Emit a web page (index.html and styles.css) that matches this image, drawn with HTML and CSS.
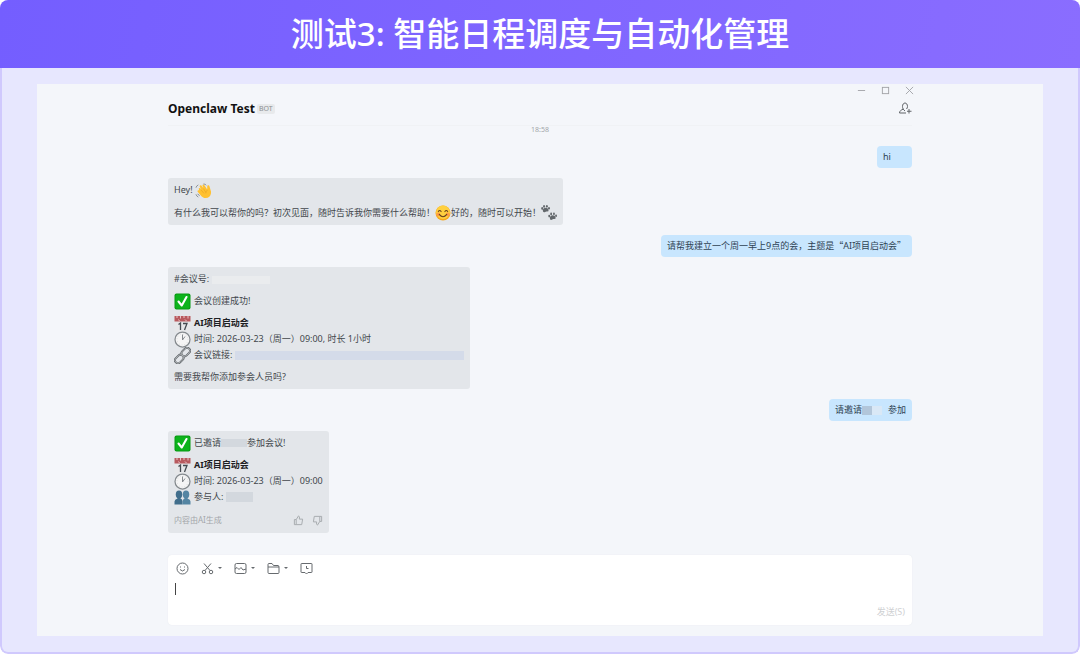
FILE: index.html
```html
<!DOCTYPE html>
<html lang="zh-CN">
<head>
<meta charset="utf-8">
<title>测试3: 智能日程调度与自动化管理</title>
<link rel="stylesheet" href="styles.css">
</head>
<body>
<svg class="defs" aria-hidden="true">
  <symbol id="check" viewBox="0 0 34 34">
    <rect x="1" y="1" width="32" height="32" rx="4" fill="#079a12"/>
    <rect x="3" y="3" width="28" height="28" rx="3" fill="#0cb31b"/>
    <path d="M9 17l6.500 8L25 8" fill="none" stroke="#fff" stroke-width="4.200" stroke-linecap="round" stroke-linejoin="round"/>
  </symbol>
  <symbol id="calendar" viewBox="0 0 34 34">
    <rect x="1" y="3" width="32" height="31" fill="#e6e7e9"/>
    <rect x="1" y="2" width="32" height="11" fill="#b85a5f"/>
    <path d="M6 2v4M13 2v5M20 2v4M28 2v5M9 9l2 3M22 9l3 3" stroke="#e9c5c7" stroke-width="2"/>
    <path d="M9 19l4-3v14M18 17h8l-5 13" fill="none" stroke="#444a50" stroke-width="2.600"/>
  </symbol>
  <symbol id="clock" viewBox="0 0 34 34">
    <circle cx="17" cy="17" r="15" fill="#f5f5f5" stroke="#858a8e" stroke-width="2.500"/>
    <circle cx="17" cy="17" r="11" fill="none" stroke="#c9cbcd" stroke-width="2" stroke-dasharray="1 4.760"/>
    <path d="M17 7v11l5-7" fill="none" stroke="#85898d" stroke-width="2"/>
  </symbol>
  <symbol id="link" viewBox="0 0 34 34">
    <g fill="none" stroke="#62676b" stroke-width="4">
      <rect x="14" y="4" width="19" height="12" rx="6" transform="rotate(-45 23.500 10)"/>
      <rect x="1" y="18" width="19" height="12" rx="6" transform="rotate(-45 10.500 24)"/>
    </g>
    <g fill="none" stroke="#c9cccf" stroke-width="1.300">
      <rect x="14" y="4" width="19" height="12" rx="6" transform="rotate(-45 23.500 10)"/>
      <rect x="1" y="18" width="19" height="12" rx="6" transform="rotate(-45 10.500 24)"/>
    </g>
  </symbol>
  <symbol id="people" viewBox="0 0 34 34">
    <g fill="#416e8c"><ellipse cx="10" cy="11" rx="6.500" ry="8"/><path d="M1 31v-6q0-4 6-6v-4h6v4q4 1 4 6v6z"/></g>
    <g fill="#5485a3"><ellipse cx="24" cy="11" rx="6.500" ry="8"/><path d="M17 31v-6q0-4 4-6v-4h6v4q6 2 6 6v6z"/></g>
  </symbol>
  <symbol id="wave" viewBox="0 0 34 34">
    <path d="M8 13c0-3 3-3 4-1l1 1-3-5c-1-3 2-4 4-2l4 5-2-5c-1-3 3-4 4-1l6 9V8c0-4 4-4 5 0l3 10c1 8-4 14-11 14-5 0-8-2-11-6L6 19c-2-3 1-5 3-3z" fill="#ffc131"/>
    <path d="M13 15l6 7M18 12l5 8M27 15q-5 2-4 7" fill="none" stroke="#e29f22" stroke-width="1.200"/>
    <path d="M2 10q1-4 5-6M18 2q4 0 6 3M2 24q1 4 5 6M6 23q1 3 4 4" fill="none" stroke="#7e858b" stroke-width="1.800"/>
  </symbol>
  <symbol id="smile" viewBox="0 0 34 34">
    <circle cx="17" cy="17" r="16" fill="#f6a81d"/>
    <circle cx="17" cy="15.500" r="14.500" fill="#ffd03e"/>
    <circle cx="7" cy="20" r="4" fill="#ff9c45"/><circle cx="27" cy="20" r="4" fill="#ff9c45"/>
    <path d="M7 14q3-5 6 0M21 14q3-5 6 0M9 20q8 10 16 0" fill="none" stroke="#69411d" stroke-width="2.200" stroke-linecap="round"/>
  </symbol>
  <symbol id="paws" viewBox="0 0 34 34">
    <g fill="#62676b"><path d="M4 13q-1-5 5-7 6 0 7 4 1 4-3 4-3-1-4 1-4 2-5-2z"/><ellipse cx="2.500" cy="7.500" rx="2" ry="3"/><ellipse cx="6.500" cy="3" rx="2" ry="3"/><ellipse cx="12.500" cy="2.800" rx="2" ry="2.800"/><ellipse cx="17" cy="7" rx="2" ry="2.600"/></g>
    <g transform="translate(15 16)" fill="#62676b"><path d="M4 13q-1-5 5-7 6 0 7 4 1 4-3 4-3-1-4 1-4 2-5-2z"/><ellipse cx="2.500" cy="7.500" rx="2" ry="3"/><ellipse cx="6.500" cy="3" rx="2" ry="3"/><ellipse cx="12.500" cy="2.800" rx="2" ry="2.800"/><ellipse cx="17" cy="7" rx="2" ry="2.600"/></g>
  </symbol>
</svg>

<div class="frame">
  <header class="banner"><h1>测试3: 智能日程调度与自动化管理</h1></header>
  <div class="stage">
    <main class="app">
      <div class="window-bar">
        <button type="button" aria-label="最小化"><svg viewBox="0 0 10 10"><path d="M1 5h8"/></svg></button>
        <button type="button" aria-label="最大化"><svg viewBox="0 0 10 10"><rect x="1.500" y="1.500" width="7" height="7"/></svg></button>
        <button type="button" aria-label="关闭"><svg viewBox="0 0 10 10"><path d="M1 1l8 8M9 1L1 9"/></svg></button>
      </div>
      <div class="chat-head">
        <h2>Openclaw Test</h2><span class="tag">BOT</span>
        <button type="button" class="add" aria-label="添加成员"><svg viewBox="0 0 28 26"><path d="M14 18c-4-3-5-6-5-9 0-4 2-7 5-7s5 3 5 7c0 2-1 4-2 5M11 14c-5 2-8 4-8 8h13M22 14v9M18 18.500h9"/></svg></button>
      </div>
      <time class="stamp">18:58</time>

      <div class="chat">
        <div class="msg me short"><p>hi</p></div>
        <div class="msg bot">
          <p>Hey! <svg class="emoji"><use href="#wave"/></svg></p>
          <p>有什么我可以帮你的吗？初次见面，随时告诉我你需要什么帮助！<svg class="emoji"><use href="#smile"/></svg>好的，随时可以开始！<svg class="emoji"><use href="#paws"/></svg></p>
        </div>
        <div class="msg me"><p>请帮我建立一个周一早上9点的会，主题是<span class="full">“</span>AI项目启动会<span class="full">”</span></p></div>
        <div class="msg bot wide">
          <p>#会议号: <span class="mask number"></span></p>
          <p class="line"><svg class="emoji"><use href="#check"/></svg>会议创建成功!</p>
          <div>
            <p class="line"><svg class="emoji"><use href="#calendar"/></svg><strong>AI项目启动会</strong></p>
            <p class="line"><svg class="emoji"><use href="#clock"/></svg>时间: 2026-03-23（周一）09:00, 时长 1小时</p>
            <p class="line"><svg class="emoji"><use href="#link"/></svg>会议链接: <span class="mask url"></span></p>
          </div>
          <p>需要我帮你添加参会人员吗?</p>
        </div>
        <div class="msg me"><p>请邀请<span class="mask name"></span>参加</p></div>
        <div class="msg bot">
          <p class="line"><svg class="emoji"><use href="#check"/></svg>已邀请<span class="mask guest"></span>参加会议!</p>
          <div>
            <p class="line"><svg class="emoji"><use href="#calendar"/></svg><strong>AI项目启动会</strong></p>
            <p class="line"><svg class="emoji"><use href="#clock"/></svg>时间: 2026-03-23（周一）09:00</p>
            <p class="line"><svg class="emoji"><use href="#people"/></svg>参与人: <span class="mask person"></span></p>
          </div>
          <div class="msg-foot">
            <span>内容由AI生成</span>
            <button type="button" aria-label="赞"><svg viewBox="0 0 24 24"><path d="M3 10h4v11H3zM7 10l5-8q3 0 2 7h7l-2 12H7"/></svg></button>
            <button type="button" aria-label="踩"><svg viewBox="0 0 24 24"><path d="M21 14h-4V3h4zM17 14l-5 8q-3 0-2-7H3L5 3h12"/></svg></button>
          </div>
        </div>
      </div>

      <form class="composer">
        <div class="tools">
          <button type="button" aria-label="表情"><svg viewBox="0 0 26 26"><circle cx="13" cy="13" r="11"/><path d="M8 15q5 6 10 0M9 9v2M17 9v2"/></svg></button>
          <button type="button" class="more" aria-label="截图"><svg viewBox="0 0 26 26"><circle cx="6" cy="20" r="3.500"/><circle cx="20" cy="20" r="3.500"/><path d="M6 3l12 14M20 3L8 17"/></svg><i></i></button>
          <button type="button" class="more" aria-label="图片"><svg viewBox="0 0 26 26"><rect x="2" y="3" width="22" height="20" rx="3"/><path d="M2 14l4-3 4 4 4-4 4 5 6-2"/></svg><i></i></button>
          <button type="button" class="more" aria-label="文件"><svg viewBox="0 0 26 26"><path d="M2 10V5q0-2 2-2h6l3 4h9q2 0 2 3M2 10h22v11q0 2-2 2H4q-2 0-2-2z"/></svg><i></i></button>
          <button type="button" aria-label="聊天记录"><svg viewBox="0 0 26 26"><path d="M3 3h20q1 0 1 1v16q0 1-1 1h-7l-3 3-3-3H3q-1 0-1-1V4q0-1 1-1zM13 8v5h4"/></svg></button>
        </div>
        <div class="entry"><span class="caret"></span><textarea aria-label="输入消息" rows="1"></textarea></div>
        <button type="submit" class="send">发送(S)</button>
      </form>
    </main>
  </div>
</div>
</body>
</html>
```
FILE: styles.css
```css
* { box-sizing: border-box; }
body {
  margin: 0;
  background: #fff;
  font: 9px/16px "Noto Sans", "Noto Sans CJK SC", sans-serif;
  color: #42474c;
}
h1, h2, p { margin: 0; }
button { display: flex; align-items: center; padding: 0; border: 0; background: none; font: inherit; color: inherit; }
svg { display: block; overflow: visible; }
button svg { fill: none; stroke: currentColor; }
.defs { display: none; }

.frame { display: flex; flex-direction: column; min-height: 100vh; border-radius: 8px; overflow: hidden; }
.banner {
  padding: 10px 0;
  background: linear-gradient(100deg, #745eff, #8a6dff);
  color: #fff;
  text-align: center;
}
.banner h1 { font: 500 33px/48px "Noto Sans", "Noto Sans CJK SC", sans-serif; }
.stage {
  flex: 1;
  display: flex;
  padding: 16px 35px;
  background: #e7e7fe;
  border: 2px solid #d0c9fd;
  border-top: 0;
  border-radius: 0 0 8px 8px;
}
.app { flex: 1; display: flex; flex-direction: column; padding-bottom: 10px; background: #f4f6fa; }

.window-bar { display: flex; justify-content: flex-end; gap: 15px; padding: 2px 129px 0; color: #a0a2a6; }
.window-bar svg { width: 9px; height: 9px; }
.chat-head { display: flex; align-items: center; gap: 2px; margin: 4px 131px 0; height: 27px; padding-bottom: 7px; border-bottom: 1px solid #f0f2f5; }
.chat-head h2 { font-size: 12px; font-weight: 700; color: #111; }
.tag { padding: 0 2px; background: #e8eaec; border-radius: 2px; font-size: 7px; line-height: 10px; color: #8d9093; }
.add { margin-left: auto; color: #606468; }
.add svg { width: 14px; height: 13px; stroke-width: 2; }
.stamp { font-size: 7px; line-height: 8px; text-align: center; color: #a3a6aa; }

.chat { display: flex; flex-direction: column; align-items: flex-start; gap: 10px; padding: 12px 131px 22px; }
.msg { display: flex; flex-direction: column; gap: 6px; padding: 4px 6px; border-radius: 3px; }
.bot { background: #e3e6ea; }
.wide { width: 302px; }
.me { align-self: flex-end; padding: 3px 6px; background: #c8e6fe; border-radius: 4px; color: #2f4354; }
.short { min-width: 35px; }
.full { font-family: "Noto Sans CJK SC", sans-serif; }
.emoji { display: inline-block; width: 16px; height: 16px; vertical-align: middle; }
.line { display: flex; align-items: center; gap: 3px; height: 16px; }
.line .emoji { width: 17px; height: 17px; }
.line .mask { margin: 0 -3px; }
strong { color: #1d2023; }
.mask { display: inline-block; height: 8px; vertical-align: middle; background: #d3d8de; }
.number { width: 58px; background: #eaecee; }
.line .url { flex: 1; height: 9px; margin: 0; background: #d4dbe9; }
.name { width: 20px; height: 9px; margin: 0 6px 0 0; background: linear-gradient(90deg, #b2c6da 50%, #d9e8f6 50%); }
.guest { width: 26px; }
.line .person { width: 27px; height: 10px; margin: 0; }
.msg-foot { display: flex; align-items: center; gap: 8px; height: 18px; font-size: 8px; color: #a3a7ab; }
.msg-foot span { margin-right: auto; }
.msg-foot svg { width: 11px; height: 11px; stroke-width: 2; }

.composer { display: flex; flex-direction: column; margin: 0 131px; padding: 6px 7px 5px; background: #fff; border-radius: 4px; box-shadow: 0 0 1px #dfe2e6; }
.tools { display: flex; align-items: center; gap: 12px; height: 14px; padding-left: 1px; color: #666a6e; }
.tools svg { width: 13px; height: 13px; stroke-width: 2; }
.more { gap: 4px; }
.more i { border: 2px solid transparent; border-top-color: currentColor; border-bottom: 0; }
.entry { display: flex; align-items: center; height: 28px; }
.caret { width: 1px; height: 12px; background: #444; }
.entry textarea { flex: 1; height: 16px; padding: 0; border: 0; outline: 0; resize: none; background: none; font: inherit; color: inherit; }
.send { align-self: flex-end; margin-top: 1px; font-size: 9px; color: #cfd1d3; }
```
